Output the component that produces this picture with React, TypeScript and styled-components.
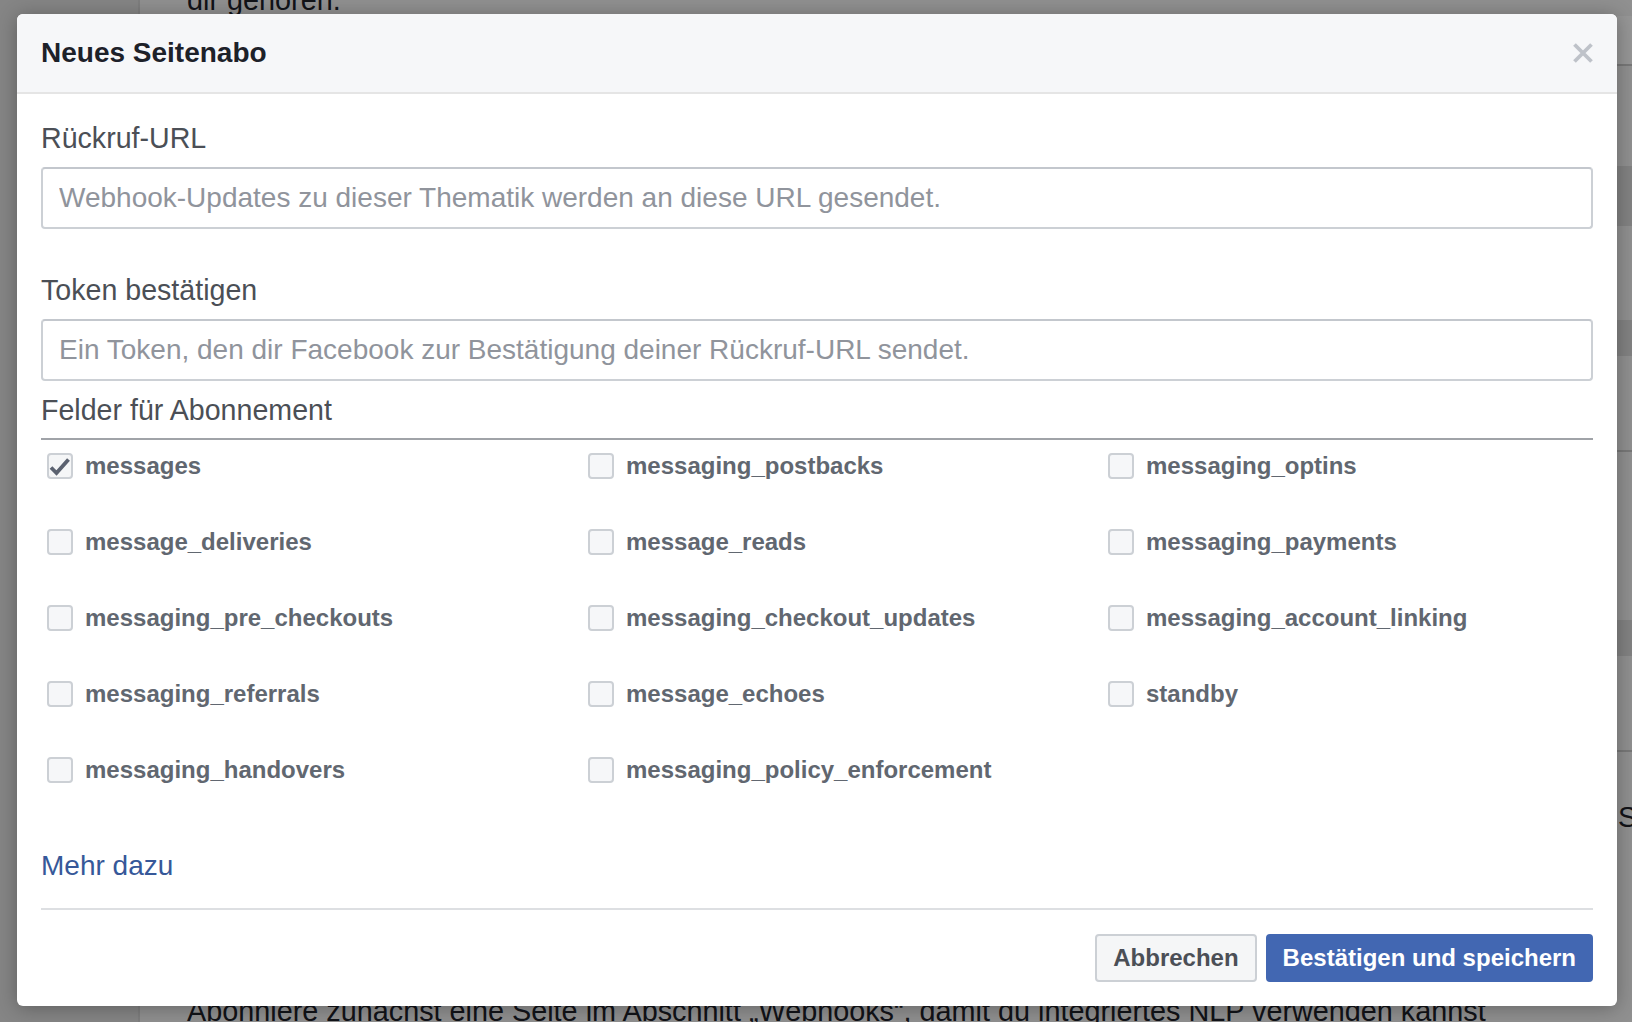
import React from 'react';
import styled, { createGlobalStyle } from 'styled-components';

const GlobalStyle = createGlobalStyle`
  html, body { margin: 0; padding: 0; }
  body {
    width: 1632px;
    height: 1022px;
    overflow: hidden;
    font-family: "Liberation Sans", Arial, Helvetica, sans-serif;
  }
  * { box-sizing: border-box; }
`;

const Page = styled.div`
  position: relative;
  display: flex;
  width: 1632px;
  height: 1022px;
  overflow: hidden;
  background: #f1f1f1;
`;

const Sidebar = styled.aside`
  width: 140px;
  flex-shrink: 0;
  background: #dedede;
  border-right: 2px solid #d2d2d2;
`;

const Main = styled.main`
  flex: 1;
  display: flex;
  flex-direction: column;
  font-size: 28.8px;
  line-height: 32px;
  color: #1d2129;
  overflow: hidden;
`;

const BgText = styled.p<{ $edge: 'top' | 'bottom' }>`
  margin: ${(p) => (p.$edge === 'top' ? '-16px 0 0' : 'auto 0 -5px')};
  padding-left: 47px;
  white-space: nowrap;
`;

const BgRow = styled.div<{ $h: number; $tone?: 'white' | 'plain' | 'band'; $rule?: boolean }>`
  height: ${(p) => p.$h}px;
  flex-shrink: 0;
  background: ${(p) => (p.$tone === 'band' ? '#d9d9d9' : p.$tone === 'white' ? '#fafafa' : 'transparent')};
  border-bottom: ${(p) => (p.$rule ? '2px solid #c8c8c8' : '0')};
`;

const BgTextRow = styled.div`
  height: 34px;
  flex-shrink: 0;
  display: grid;
  grid-template-columns: 1431px 1fr;
  align-items: center;
  padding-left: 47px;
  white-space: nowrap;
`;

const Overlay = styled.div`
  position: absolute;
  inset: 0;
  background: rgba(0, 0, 0, 0.4);
  padding: 14px 0 0 17px;
`;

const Modal = styled.div`
  width: 1600px;
  background: #fff;
  border-radius: 6px;
  box-shadow: 0 2px 20px rgba(0, 0, 0, 0.3);
  overflow: hidden;
  display: flex;
  flex-direction: column;
`;

const Header = styled.div`
  height: 80px;
  padding: 0 24px;
  display: flex;
  align-items: center;
  justify-content: space-between;
  background: #f6f7f9;
  border-bottom: 2px solid #e5e5e5;
`;

const Title = styled.h2`
  margin: 0;
  font-size: 28px;
  line-height: 32px;
  font-weight: bold;
  color: #1d2129;
`;

const CloseButton = styled.button`
  width: 20px;
  height: 20px;
  padding: 0;
  border: 0;
  background: none;
  display: block;
  cursor: pointer;
`;

const Body = styled.div`
  padding: 28px 24px 26px;
  font-size: 28px;
  line-height: 32px;
`;

const Field = styled.div<{ $spacing: number }>`
  margin-bottom: ${(p) => p.$spacing}px;
`;

const FieldLabel = styled.label`
  display: block;
  margin-bottom: 13px;
  font-size: 28.6px;
  line-height: 32px;
  color: #4b4f56;
`;

const TextInput = styled.input`
  display: block;
  width: 100%;
  height: 62px;
  padding: 0 16px;
  border: 2px solid #ccd0d5;
  border-top-color: #c3c7cd;
  border-radius: 4px;
  font-family: "Liberation Sans", Arial, sans-serif;
  font-size: 28px;
  color: #1d2129;
  background: #fff;
  outline: none;
  &::placeholder { color: #90949c; }
`;

const SectionHeading = styled.div`
  padding-bottom: 12px;
  border-bottom: 2px solid #a0a3a8;
  font-size: 28.6px;
  line-height: 32px;
  color: #4b4f56;
`;

const OptionGrid = styled.div`
  display: grid;
  grid-template-columns: 541px 520px 1fr;
  grid-auto-rows: 52px;
  row-gap: 24px;
`;

const OptionItem = styled.label`
  display: flex;
  align-items: center;
  gap: 12px;
  padding-left: 6px;
  font-size: 24px;
  line-height: 28px;
  font-weight: bold;
  color: #616770;
  white-space: nowrap;
`;

const Box = styled.span<{ $checked: boolean }>`
  width: 26px;
  height: 26px;
  flex-shrink: 0;
  border: 2px solid #ccd0d5;
  border-radius: 4px;
  background: ${(p) => (p.$checked ? '#f5f6f7' : '#f6f7f9')};
  position: relative;
`;

const Check = styled.svg`
  position: absolute;
  left: -2px;
  top: -2px;
`;

const MoreLink = styled.a`
  display: block;
  width: fit-content;
  margin-top: 54px;
  font-size: 28px;
  line-height: 32px;
  color: #365899;
  text-decoration: none;
`;

const Footer = styled.div`
  margin: 0 24px;
  padding: 24px 0;
  border-top: 2px solid #dddfe2;
  display: flex;
  justify-content: flex-end;
  gap: 9px;
`;

const Button = styled.button<{ $primary?: boolean }>`
  height: 48px;
  padding: ${(p) => (p.$primary ? '0 15px' : '0 16px')};
  border-radius: 4px;
  border: 2px solid ${(p) => (p.$primary ? '#4267b2' : '#ccd0d5')};
  background: ${(p) => (p.$primary ? '#4267b2' : '#f5f6f7')};
  color: ${(p) => (p.$primary ? '#fff' : '#4b4f56')};
  font-family: "Liberation Sans", Arial, sans-serif;
  font-size: 24px;
  font-weight: bold;
  line-height: 28px;
  cursor: pointer;
`;

const fields: { name: string; checked?: boolean }[] = [
  { name: 'messages', checked: true },
  { name: 'messaging_postbacks' },
  { name: 'messaging_optins' },
  { name: 'message_deliveries' },
  { name: 'message_reads' },
  { name: 'messaging_payments' },
  { name: 'messaging_pre_checkouts' },
  { name: 'messaging_checkout_updates' },
  { name: 'messaging_account_linking' },
  { name: 'messaging_referrals' },
  { name: 'message_echoes' },
  { name: 'standby' },
  { name: 'messaging_handovers' },
  { name: 'messaging_policy_enforcement' },
];

function Checkbox({ checked }: { checked: boolean }) {
  return (
    <Box $checked={checked}>
      {checked && (
        <Check width="26" height="26" viewBox="0 0 26 26">
          <polyline
            points="4,14.5 9.5,20 21.5,6.5"
            fill="none"
            stroke="#5b6270"
            strokeWidth="3.8"
            strokeLinejoin="miter"
          />
        </Check>
      )}
    </Box>
  );
}

export default function App() {
  return (
    <>
      <GlobalStyle />
      <Page>
        <Sidebar />
        <Main>
          <BgText $edge="top">dir gehören.</BgText>
          <BgRow $h={50} $tone="white" $rule />
          <BgRow $h={100} />
          <BgRow $h={60} $tone="band" />
          <BgRow $h={94} />
          <BgRow $h={36} $tone="band" />
          <BgRow $h={96} $rule />
          <BgRow $h={168} />
          <BgRow $h={36} $tone="band" />
          <BgRow $h={96} $rule />
          <BgRow $h={48} />
          <BgTextRow>
            <span>Seite</span>
            <span>Sie</span>
          </BgTextRow>
          <BgText $edge="bottom">
            Abonniere zunächst eine Seite im Abschnitt „Webhooks“, damit du integriertes NLP verwenden kannst
          </BgText>
        </Main>
        <Overlay>
          <Modal>
            <Header>
              <Title>Neues Seitenabo</Title>
              <CloseButton aria-label="Schließen">
                <svg width="20" height="20" viewBox="0 0 20 20">
                  <path d="M1.5 1.5 L18.5 18.5 M18.5 1.5 L1.5 18.5" stroke="#bec2c9" strokeWidth="3.8" />
                </svg>
              </CloseButton>
            </Header>
            <Body>
              <Field $spacing={45}>
                <FieldLabel>Rückruf-URL</FieldLabel>
                <TextInput placeholder="Webhook-Updates zu dieser Thematik werden an diese URL gesendet." />
              </Field>
              <Field $spacing={13}>
                <FieldLabel>Token bestätigen</FieldLabel>
                <TextInput placeholder="Ein Token, den dir Facebook zur Bestätigung deiner Rückruf-URL sendet." />
              </Field>
              <SectionHeading>Felder für Abonnement</SectionHeading>
              <OptionGrid>
                {fields.map((f) => (
                  <OptionItem key={f.name}>
                    <Checkbox checked={!!f.checked} />
                    {f.name}
                  </OptionItem>
                ))}
              </OptionGrid>
              <MoreLink href="#">Mehr dazu</MoreLink>
            </Body>
            <Footer>
              <Button>Abbrechen</Button>
              <Button $primary>Bestätigen und speichern</Button>
            </Footer>
          </Modal>
        </Overlay>
      </Page>
    </>
  );
}
